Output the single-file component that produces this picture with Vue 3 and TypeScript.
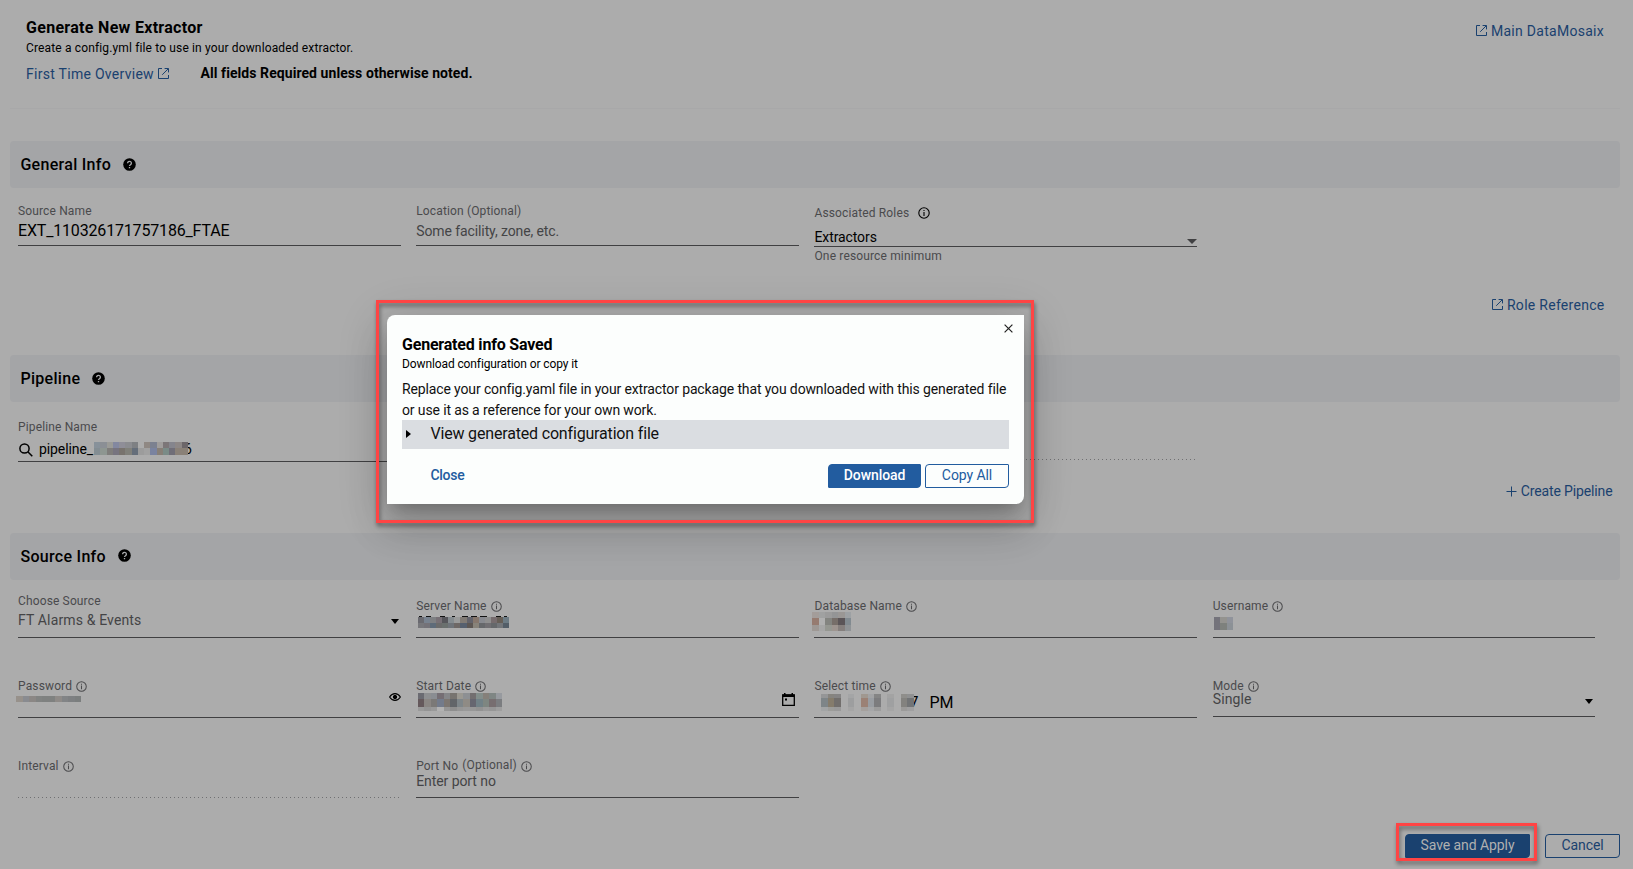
<script setup lang="ts">
import { h, type FunctionalComponent } from 'vue'

/* Small outlined "i" badge placed after field labels */
const InfoIcon: FunctionalComponent = () =>
  h('svg', { class: 'info', viewBox: '0 0 12 12', fill: 'none', stroke: 'currentColor' }, [
    h('circle', { cx: 6, cy: 6, r: 5.2, 'stroke-width': 1.1 }),
    h('path', { d: 'M6 5v4M6 3v1.1', 'stroke-width': 1.1 }),
  ])

const HelpIcon: FunctionalComponent = () =>
  h('svg', { class: 'help', viewBox: '0 0 13 13' }, [
    h('circle', { cx: 6.5, cy: 6.5, r: 6.3, fill: '#000' }),
    h('path', {
      d: 'M4.6 5.2a1.9 1.8 0 1 1 3 1.4c-.7.5-1.1.7-1.1 1.5M6.5 9.1v1.2',
      fill: 'none',
      stroke: '#a6a7a9',
      'stroke-width': 1.3,
    }),
  ])

const OpenIcon: FunctionalComponent = () =>
  h('svg', { class: 'open', viewBox: '0 0 11 11', fill: 'none', stroke: 'currentColor' }, [
    h('path', { d: 'M4 .5H.5v10h10V7M6.6.5h3.9v3.9M10.2.8L4.2 6.8', 'stroke-width': 1 }),
  ])

interface MosaicProps {
  rows: string[]
  w: number
  hs: number[]
}

/* Pixelated mask over a sensitive value; each row is a space separated list of colours */
const Mosaic: FunctionalComponent<MosaicProps> = (p) => {
  const cells = p.rows.map((r) => r.split(' '))
  const total = p.hs.reduce((a, b) => a + b, 0)
  const cw = p.w / cells[0].length
  let y = 0
  const rects = cells.flatMap((row, i) => {
    const top = y
    y += p.hs[i]
    return row.map((c, j) =>
      h('rect', {
        x: Math.round(j * cw),
        y: top,
        width: Math.round((j + 1) * cw) - Math.round(j * cw),
        height: p.hs[i],
        fill: c === '-' ? 'none' : '#' + c,
      }),
    )
  })
  return h('svg', { width: p.w, height: total, viewBox: `0 0 ${p.w} ${total}`, 'shape-rendering': 'crispEdges' }, rects)
}
Mosaic.props = ['rows', 'w', 'hs']

const masks = {
  pipeline: {
    w: 94,
    hs: [6, 7],
    rows: [
      '87919a 8b8f95 9b9b97 8388a0 8f8e98 8b8c90 7e8083 acacac 8f8883 7c8190 a09d9c 7c7678 85858d 8d8786 6c6669',
      '838d93 8e9691 7f7d7b 77747f 78736e 80807a 656e7a 9c9c9c a1a1a1 7a83a0 877f77 7a8b87 706e78 8a8178 8a8177',
    ],
  },
  server: {
    w: 91,
    hs: [6, 5],
    rows: [
      '6a6a70 78828f 7e8083 777076 56565b 858c90 9a9b9b 817b75 63636b 86776d 888a90 8f8f8f 766c6e 665f57 6c7b84',
      '77777b 747278 5e6b79 6b6b6b 6a706e 6f747a 6e6866 56606f 5d5754 88837a 66686b 716f73 65686b 73767a 535e68',
    ],
  },
  database: {
    w: 39,
    hs: [6, 7, 6],
    rows: ['a39d9a a0a1a1 9b9b9b 949596 9a9795 9da1a4', '967b70 b0b0b0 838480 766e69 5b5558 818a90', '9e9894 a6a6a6 959791 9d948f 857f7d 8f9396'],
  },
  user: { w: 19, hs: [6, 7], rows: ['74737b 94938f 90939b', '74737b 7e817d 8c9196'] },
  password: { w: 65, hs: [6], rows: ['97918b 898b90 8b8785 818382 7f8180 7f8180 8f8b88 828486 7e8082 7b7e7e'] },
  date: {
    w: 84,
    hs: [6, 8, 4],
    rows: [
      '6b6b72 8e8f91 8a8d92 756e74 858689 777470 9b9992 8d9093 736f70 838e8b 85807a 7f8684 979a9f',
      '65595c 8a8683 7b7977 737b8b 7c7671 626569 7e868a 8f8b85 666670 718187 7e8681 776e70 7b7d80',
      '9a9a9a 949494 999999 b2b2b2 959595 8e8e8e 969696 999999 979797 929292 9a9a9a 969696 9e9e9e',
    ],
  },
  time: {
    w: 93,
    hs: [4, 9, 4],
    rows: [
      '959697 86847f 858484 - a4a5a6 - a09890 a2a3a5 858585 - a3a3a3 - 8f8e8b 8f9091',
      '7e8588 857c6c 716e6c - 9d9e9f - 9b8175 999da2 7c7c7e - 9fa0a1 - 83827f 727476',
      'a2a4a5 9c9c99 999999 - a5a5a5 - a5a09d a5a6a8 9c9c9c - a5a5a5 - 9b9a99 9f9fa0',
    ],
  },
}
</script>

<template>
  <div class="page">
    <header class="head">
      <div class="intro">
        <h1>Generate New Extractor</h1>
        <p class="sub">Create a config.yml file to use in your downloaded extractor.</p>
        <div class="overview">
          <a class="link">First Time Overview <OpenIcon /></a>
          <strong>All fields Required unless otherwise noted.</strong>
        </div>
      </div>
      <a class="link main"><OpenIcon /> Main DataMosaix</a>
    </header>

    <section class="bar"><h2>General Info</h2><HelpIcon /></section>
    <div class="grid general">
      <div class="field">
        <label>Source Name</label>
        <div class="value large">EXT_110326171757186_FTAE</div>
      </div>
      <div class="field">
        <label>Location (Optional)</label>
        <div class="value hint">Some facility, zone, etc.</div>
      </div>
      <div class="roles">
        <div class="field">
          <label>Associated Roles <InfoIcon /></label>
          <div class="value">Extractors</div>
          <i class="arrow wide"></i>
        </div>
        <div class="helper">One resource minimum</div>
      </div>
    </div>
    <div class="action role"><a class="link"><OpenIcon /> Role Reference</a></div>

    <section class="bar"><h2>Pipeline</h2><HelpIcon /></section>
    <div class="grid pipe">
      <div class="field">
        <label>Pipeline Name</label>
        <div class="value searchline">
          <svg class="search" viewBox="0 0 14 14" fill="none" stroke="#000" stroke-width="1.5">
            <circle cx="5.5" cy="5.5" r="4.6" />
            <path d="M8.8 8.8L13.3 13.3" />
          </svg>
          <span>pipeline_</span><span class="tail">6</span>
        </div>
        <Mosaic class="mask m-pipe" v-bind="masks.pipeline" />
      </div>
      <div></div>
      <div class="field off"></div>
    </div>
    <div class="action create">
      <a class="link tight">
        <svg class="plus" viewBox="0 0 11 11" stroke="currentColor" stroke-width="1"><path d="M5.5 .5v10M.5 5.5h10" /></svg>
        Create Pipeline
      </a>
    </div>

    <section class="bar last"><h2>Source Info</h2><HelpIcon /></section>
    <div class="grid source">
      <div class="field choose">
        <label>Choose Source</label>
        <div class="value hint spaced">FT Alarms &amp; Events</div>
        <i class="arrow"></i>
      </div>
      <div class="field">
        <label>Server Name <InfoIcon /></label>
        <svg class="mask m-peek" width="90" height="1" stroke="#111" stroke-dasharray="3 4 5 9 5 7 3 7 6 3 6 3 7 9 5 3 3 20"><path d="M1 .5h88" /></svg>
        <Mosaic class="mask m-server" v-bind="masks.server" />
      </div>
      <div class="field">
        <label>Database Name <InfoIcon /></label>
        <Mosaic class="mask m-db" v-bind="masks.database" />
      </div>
      <div class="field">
        <label>Username <InfoIcon /></label>
        <Mosaic class="mask m-user" v-bind="masks.user" />
      </div>

      <div class="field">
        <label>Password <InfoIcon /></label>
        <Mosaic class="mask m-pass" v-bind="masks.password" />
        <svg class="eye" viewBox="0 0 12 8" fill="none" stroke="#000">
          <path d="M.6 4C2 1.7 3.9.6 6 .6S10 1.7 11.4 4C10 6.3 8.1 7.4 6 7.4S2 6.3.6 4z" stroke-width="1.1" />
          <circle cx="6" cy="4" r="1.7" fill="#000" />
        </svg>
      </div>
      <div class="field">
        <label>Start Date <InfoIcon /></label>
        <Mosaic class="mask m-date" v-bind="masks.date" />
        <svg class="calendar" viewBox="0 0 13 13">
          <path d="M.7 2h11.6v10.3H.7z" fill="none" stroke="#000" stroke-width="1.3" />
          <path d="M.5 1.4h12V4H.5zM2 0h1.5v2H2zM9.5 0H11v2H9.5zM3 5.5h2v2H3z" />
        </svg>
      </div>
      <div class="field">
        <label>Select time <InfoIcon /></label>
        <div class="time"><span class="digit">7</span><span>PM</span></div>
        <Mosaic class="mask m-time" v-bind="masks.time" />
      </div>
      <div class="field mode">
        <label>Mode <InfoIcon /></label>
        <div class="value hint spaced">Single</div>
        <i class="arrow"></i>
      </div>

      <div class="field off">
        <label>Interval <InfoIcon /></label>
      </div>
      <div class="field port">
        <label>Port No <span class="opt">(Optional)</span> <InfoIcon /></label>
        <div class="value hint">Enter port no</div>
      </div>
    </div>

    <footer class="foot">
      <div class="spot">
        <button class="btn solid save">Save and Apply</button>
        <div class="frame small"></div>
      </div>
      <button class="btn cancel">Cancel</button>
    </footer>

    <div class="modal">
      <svg class="close" viewBox="0 0 9 9" stroke="#222" stroke-width="1.2"><path d="M.6.6l7.8 7.8M8.4.6L.6 8.4" /></svg>
      <h3>Generated info Saved</h3>
      <p class="desc">Download configuration or copy it</p>
      <p class="body">
        Replace your config.yaml file in your extractor package that you downloaded with this generated file<br />or use it as
        a reference for your own work.
      </p>
      <div class="panel"><i class="caret"></i>View generated configuration file</div>
      <div class="buttons">
        <a class="dismiss">Close</a>
        <button class="btn solid download">Download</button>
        <button class="btn copy">Copy All</button>
      </div>
    </div>
    <div class="frame large-frame"></div>
  </div>
</template>

<style>
body {
  margin: 0;
  background: #acacac;
}
</style>

<style scoped>
.page {
  position: relative;
  box-sizing: border-box;
  height: 869px;
  overflow: hidden;
  background: #acacac;
  color: #000;
  font-family: Roboto, sans-serif;
}
h1, h2, h3, p {
  margin: 0;
}
.head {
  display: flex;
  justify-content: space-between;
  box-sizing: border-box;
  height: 109px;
  margin: 0 13px 32px 10px;
  padding: 18px 16px 0 16px;
  border-bottom: 1px solid #a8a8a9;
}
h1 {
  font-size: 16px;
  line-height: 20px;
  letter-spacing: 0.3px;
}
.sub {
  margin-top: 2px;
  font-size: 12px;
  line-height: 16px;
  letter-spacing: 0.145px;
}
.overview {
  display: flex;
  margin-top: 9px;
  height: 18px;
  font-size: 14px;
  line-height: 18px;
}
.overview .link {
  width: 174.5px;
  line-height: 18px;
}
.overview strong {
  line-height: 16px;
  letter-spacing: 0.07px;
}
.link {
  color: #1a416f;
  font-size: 14px;
  line-height: 16px;
  letter-spacing: 0.28px;
  white-space: nowrap;
}
.overview .link {
  line-height: 18px;
}
.link.tight {
  letter-spacing: -0.13px;
}
.open {
  width: 11px;
  height: 11px;
}
.main {
  margin-top: 5px;
}
.plus {
  width: 11px;
  height: 11px;
  margin-bottom: -1px;
}
.bar {
  display: flex;
  align-items: center;
  gap: 12px;
  box-sizing: border-box;
  height: 47px;
  margin: 0 13px 0 10px;
  padding: 0 10.4px;
  border-radius: 4px;
  background: #a4a5a7;
}
h2 {
  font-size: 16px;
  font-weight: 500;
  line-height: 20px;
  letter-spacing: 0.3px;
}
.help {
  width: 13px;
  height: 13px;
  margin-top: -1px;
}
.last .help {
  margin-top: -3px;
}
.grid {
  display: grid;
  grid-template-columns: repeat(4, 382.6px);
  column-gap: 15.65px;
  align-items: start;
  margin-left: 18px;
}
.field {
  position: relative;
  display: flex;
  flex-direction: column;
  box-sizing: border-box;
  border-bottom: 1px solid #404042;
}
.field.off {
  border-bottom: 0;
  background: repeating-linear-gradient(90deg, #707072 0 1px, transparent 1px 4px) bottom left / 100% 1px no-repeat;
}
label {
  height: 16px;
  color: #4a4a4c;
  font-size: 12px;
  line-height: 16px;
  letter-spacing: 0.14px;
  white-space: nowrap;
}
.info {
  width: 11px;
  height: 11px;
  margin: 0 0 -2px 1px;
}
.value {
  height: 16px;
  font-size: 14px;
  line-height: 16px;
  letter-spacing: -0.1px;
}
.hint {
  color: #444446;
}
.spaced {
  letter-spacing: 0.14px;
}
.large {
  height: 20px;
  font-size: 16px;
  line-height: 20px;
  letter-spacing: -0.17px;
}
.general {
  height: 76px;
}
.general .field {
  height: 58px;
  padding-top: 15px;
}
.general .value {
  margin-top: 4px;
}
.general .large {
  margin-top: 2px;
}
.roles .field {
  height: 59px;
  padding-top: 17px;
}
.roles .value {
  margin-top: 8px;
}
.roles .info {
  width: 12px;
  height: 12px;
  margin-left: 6px;
  color: #000;
}
.helper {
  margin-top: 1px;
  color: #4a4a4c;
  font-size: 12px;
  line-height: 16px;
  letter-spacing: 0.15px;
}
.arrow {
  position: absolute;
  right: 2px;
  bottom: 13px;
  border: 4.5px solid transparent;
  border-top: 5px solid #000;
  border-bottom: 0;
}
.arrow.wide {
  right: 0;
  bottom: 2px;
  border-width: 5px 5px 0;
  border-top-color: #404042;
}
.action {
  display: flex;
  justify-content: flex-end;
  height: 16px;
}
.role {
  margin: 33px 28.5px 42px 0;
}
.create {
  margin: 21px 20.5px 34px 0;
}
.pipe {
  height: 60px;
}
.pipe .field {
  height: 60px;
  padding-top: 17px;
}
.pipe .off {
  height: 58px;
}
.searchline {
  display: flex;
  margin-top: 6px;
}
.search {
  width: 14px;
  height: 14px;
  margin: 2px 6px 0 1px;
}
.tail {
  margin-left: 91px;
}
.mask {
  position: absolute;
}
.m-pipe {
  left: 76px;
  top: 40px;
}
.source {
  grid-template-rows: 58px 80px 80px;
}
.source .field {
  height: 80px;
  padding-top: 40px;
}
.source .field:nth-child(-n + 4) {
  height: 58px;
  padding-top: 18px;
}
.source .choose:first-child {
  padding-top: 13px;
}
.choose .value {
  margin-top: 3px;
}
.source .mode {
  height: 79px;
}
.mode .value {
  margin-top: -3px;
}
.mode .arrow {
  bottom: 12px;
}
.port .value {
  margin-top: -1px;
  letter-spacing: -0.08px;
}
.opt {
  position: relative;
  top: -1px;
  margin-left: 1px;
}
.m-peek {
  left: 2px;
  top: 36px;
}
.m-server {
  left: 2px;
  top: 37px;
}
.m-db {
  left: -2px;
  top: 32px;
}
.m-user {
  left: 1px;
  top: 37px;
}
.m-pass {
  left: -2px;
  top: 58px;
}
.m-date {
  left: 2px;
  top: 55px;
}
.m-time {
  left: 7px;
  top: 56px;
}
.time {
  display: flex;
  margin: -1px 0 0 95px;
  font-size: 16px;
  line-height: 20px;
}
.digit {
  width: 20px;
}
.eye {
  position: absolute;
  right: 0;
  bottom: 16px;
  width: 12px;
  height: 8px;
}
.calendar {
  position: absolute;
  right: 4px;
  bottom: 11px;
  width: 13px;
  height: 13px;
}
.foot {
  display: flex;
  justify-content: flex-end;
  gap: 15px;
  margin: 36px 13px 0 0;
}
.btn {
  box-sizing: border-box;
  height: 24px;
  padding: 0 0 2px;
  border: 1px solid #1a416f;
  border-radius: 4px 1px 4px 1px;
  background: none;
  color: #1a416f;
  font: 400 14px/20px Roboto, sans-serif;
  letter-spacing: -0.08px;
}
.save {
  display: block;
  width: 125px;
  background: #1a416f;
  color: #b0b0b0;
}
.cancel {
  width: 75px;
}
.spot {
  position: relative;
}
.frame {
  position: absolute;
  box-sizing: border-box;
  border: 3px solid #ff4444;
  filter: drop-shadow(1px 3px 2px rgba(0, 0, 0, 0.45));
}
.small {
  left: -9px;
  top: -11px;
  width: 141px;
  height: 38px;
}
.large-frame {
  left: 376px;
  top: 300px;
  width: 658px;
  height: 223px;
}
.modal {
  position: absolute;
  left: 387px;
  top: 315px;
  box-sizing: border-box;
  width: 637px;
  height: 189px;
  padding: 20px 15px 0;
  border-radius: 8px 0 8px 0;
  background: #fcfefd;
  box-shadow:
    0 11px 15px -7px rgba(0, 0, 0, 0.2),
    0 24px 38px 3px rgba(0, 0, 0, 0.14),
    0 9px 46px 8px rgba(0, 0, 0, 0.12);
}
.close {
  position: absolute;
  right: 11px;
  top: 8.5px;
  width: 9px;
  height: 9px;
}
h3 {
  font-size: 16px;
  line-height: 20px;
  letter-spacing: -0.2px;
}
.desc {
  margin-top: 1px;
  font-size: 12px;
  line-height: 16px;
  letter-spacing: -0.11px;
}
.body {
  margin-top: 7px;
  font-size: 14px;
  line-height: 21px;
  letter-spacing: -0.13px;
  white-space: nowrap;
  color: #111;
}
.panel {
  display: flex;
  align-items: center;
  box-sizing: border-box;
  height: 29px;
  margin-top: -1px;
  padding: 0 0 2px 4px;
  background: #dadde1;
  font-size: 16px;
  letter-spacing: -0.17px;
  color: #111;
}
.caret {
  margin-right: 19.4px;
  border: 4px solid transparent;
  border-left: 5px solid #000;
  border-right: 0;
}
.buttons {
  display: flex;
  margin-top: 15px;
}
.dismiss {
  margin: 0 auto 0 28.4px;
  color: #225c9f;
  font-size: 14px;
  font-weight: 500;
  line-height: 22px;
  letter-spacing: -0.25px;
}
.download {
  width: 93px;
  margin-right: 4px;
}
.copy {
  width: 84px;
}
.modal .btn {
  border-color: #225c9f;
  color: #225c9f;
}
.modal .solid {
  background: #225c9f;
  color: #fff;
}
.modal .download {
  font-weight: 500;
}
</style>
